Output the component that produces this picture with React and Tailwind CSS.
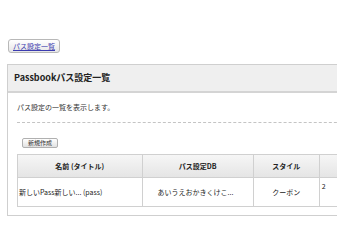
import React from 'react';

const font = { fontFamily: '"Noto Sans CJK JP", "Liberation Sans", sans-serif' };

const App = () => {
  return (
    <div className="w-[337px] h-[250px] overflow-hidden bg-white" style={font}>
      <div className="flex pt-[39px] pl-[8px]">
        <button className="h-[14px] w-[52px] flex items-center justify-center rounded-[3px] border border-[#b8b8b8] bg-gradient-to-b from-white to-[#e6e6e6] text-[7px] leading-none text-[#3b3bb0] underline">
          パス設定一覧
        </button>
      </div>

      <div className="mt-[11px] ml-[7px] w-[360px] border border-[#cfcfcf]">
        <div className="h-[28px] flex items-center px-[6px] bg-[#efefef] border-b-2 border-[#d4d4d4] text-[9px] font-bold text-[#222]">
          Passbookパス設定一覧
        </div>

        <div className="px-[9px]">
          <div className="h-[30px] flex items-center text-[7px] text-[#333] border-b border-dashed border-[#c4c4c4]">
            パス設定の一覧を表示します。
          </div>

          <div className="flex pt-[15px] pl-[5px]">
            <button className="h-[10px] w-[36px] flex items-center justify-center rounded-[2px] border border-[#b0b0b0] bg-gradient-to-b from-white to-[#e2e2e2] text-[6px] leading-none text-[#333]">
              新規作成
            </button>
          </div>

          <table className="mt-[6px] border-collapse text-[7px] text-[#222] mb-[8px]">
            <thead>
              <tr className="h-[23px] bg-gradient-to-b from-[#f6f6f6] to-[#e4e4e4]">
                <th className="w-[128px] border border-[#d0d0d0] font-bold">名前 (タイトル)</th>
                <th className="w-[113px] border border-[#d0d0d0] font-bold">パス設定DB</th>
                <th className="w-[71px] border border-[#d0d0d0] font-bold">スタイル</th>
                <th className="w-[40px] border border-[#d0d0d0]"></th>
              </tr>
            </thead>
            <tbody>
              <tr className="h-[29px]">
                <td className="border border-[#d0d0d0] pl-[1px] whitespace-nowrap">新しいPass新しい... (pass)</td>
                <td className="border border-[#d0d0d0] pl-[15px] whitespace-nowrap">あいうえおかきくけこ...</td>
                <td className="border border-[#d0d0d0] text-center">クーポン</td>
                <td className="border border-[#d0d0d0] align-top pt-[3px] pl-[2px]">2</td>
              </tr>
            </tbody>
          </table>
        </div>
      </div>
    </div>
  );
};

export default App;
